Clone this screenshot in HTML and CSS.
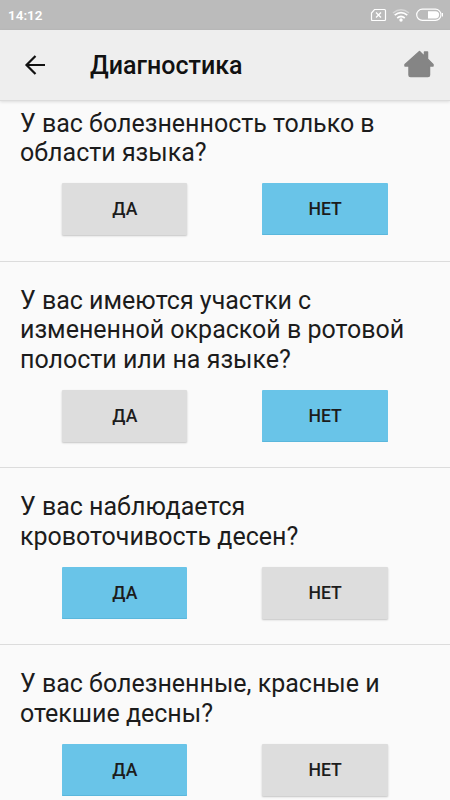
FILE: index.html
```html
<!DOCTYPE html>
<html lang="ru">
<head>
<meta charset="utf-8">
<title>Диагностика</title>
<link rel="stylesheet" href="styles.css">
</head>
<body>
<div class="status">
  <span class="time">14:12</span>
  <svg class="status-icons" width="74" height="16" viewBox="0 0 74 16" fill="none" stroke="#fff">
    <path d="M4.500 2.500H14.500Q15.500 2.500 15.500 3.500V12.500Q15.500 13.500 14.500 13.500H2.500Q1.500 13.500 1.500 12.500V6Z" stroke-width="1.200"/>
    <path d="M6 5.500l5 5m0-5l-5 5" stroke-width="1.300"/>
    <path d="M23 6q8-6.500 16 0" stroke-width="1.500" opacity=".4"/>
    <path d="M24.700 8.200q6.300-5 12.600 0M27.200 11q3.800-3 7.600 0" stroke-width="1.700"/>
    <circle cx="31" cy="13" r="1.700" fill="#fff" stroke="none"/>
    <rect x="46.700" y="2.200" width="24.300" height="11.200" rx="5.600" stroke-width="1.200"/>
    <path d="M58 4.200H65.500a3.600 3.600 0 0 1 0 7.200H58z" fill="#fff" stroke="none"/>
    <path d="M72.500 6v3.500"/>
  </svg>
</div>
<header class="bar">
  <svg class="back" width="22" height="22" viewBox="0 0 22 22" fill="none" stroke="#111" stroke-width="2.200"><path d="M21 11H3M11.500 2L2.500 11l9 9"/></svg>
  <h1>Диагностика</h1>
  <svg class="home" width="30" height="28" viewBox="0 0 30 28" fill="#858585" stroke="#858585" stroke-width="1.500" stroke-linejoin="round"><path d="M15.500 1.500L20.500 6.500V2H23.500V9L29 14.500V16H25.500V25Q25.500 26.500 24 26.500H6.500Q5 26.500 5 25V16H1V14.500Z"/></svg>
</header>
<main>
  <section class="question">
    <p>У вас болезненность только в<br>области языка?</p>
    <div class="answers"><button>ДА</button><button class="selected">НЕТ</button></div>
  </section>
  <section class="question">
    <p>У вас имеются участки с<br>измененной окраской в ротовой<br>полости или на языке?</p>
    <div class="answers"><button>ДА</button><button class="selected">НЕТ</button></div>
  </section>
  <section class="question">
    <p>У вас наблюдается<br>кровоточивость десен?</p>
    <div class="answers"><button class="selected">ДА</button><button>НЕТ</button></div>
  </section>
  <section class="question">
    <p>У вас болезненные, красные и<br>отекшие десны?</p>
    <div class="answers"><button class="selected">ДА</button><button>НЕТ</button></div>
  </section>
</main>
</body>
</html>
```
FILE: styles.css
```css
* { box-sizing: border-box; }
body { margin: 0; height: 800px; overflow: hidden; display: flex; flex-direction: column; background: #fafafa; color: #1c1c1c; font-family: Roboto, sans-serif; }
.status { flex: none; height: 30px; padding: 0 6px 0 8px; display: flex; align-items: center; justify-content: space-between; background: #bbb; color: #fff; }
.time { font-size: 13.5px; font-weight: 600; }
.status-icons { margin-top: -1px; }
.bar { flex: none; height: 71px; padding: 0 16px 0 24px; display: flex; align-items: center; background: #eee; border-bottom: 1px solid #dcdcdc; box-shadow: 0 1px 3px rgba(0,0,0,.12); position: relative; }
h1 { margin: 2px 0 0 44px; font-size: 25px; line-height: 30px; font-weight: 500; color: #111; }
.home { margin: -2px 0 0 auto; }
main { flex: 1; min-height: 0; overflow: hidden; }
.question { padding: 24px 20px 25.5px; border-bottom: 1px solid #dcdcdc; }
.question:first-child { padding-top: 7.5px; }
.question p { margin: 0; font-size: 25px; line-height: 29.5px; white-space: nowrap; }
.answers { display: flex; gap: 75px; margin: 15.5px 0 0 42.2px; }
button { width: 125.3px; height: 52px; padding: 0; border: 0; border-radius: 1px; background: #ddd; color: #1c1c1c; font: 500 17.6px Roboto, sans-serif; box-shadow: 0 1px 2px rgba(0,0,0,.22); }
.selected { background: #69c4e8; box-shadow: inset 0 -1px #5ab7dc; }
```
